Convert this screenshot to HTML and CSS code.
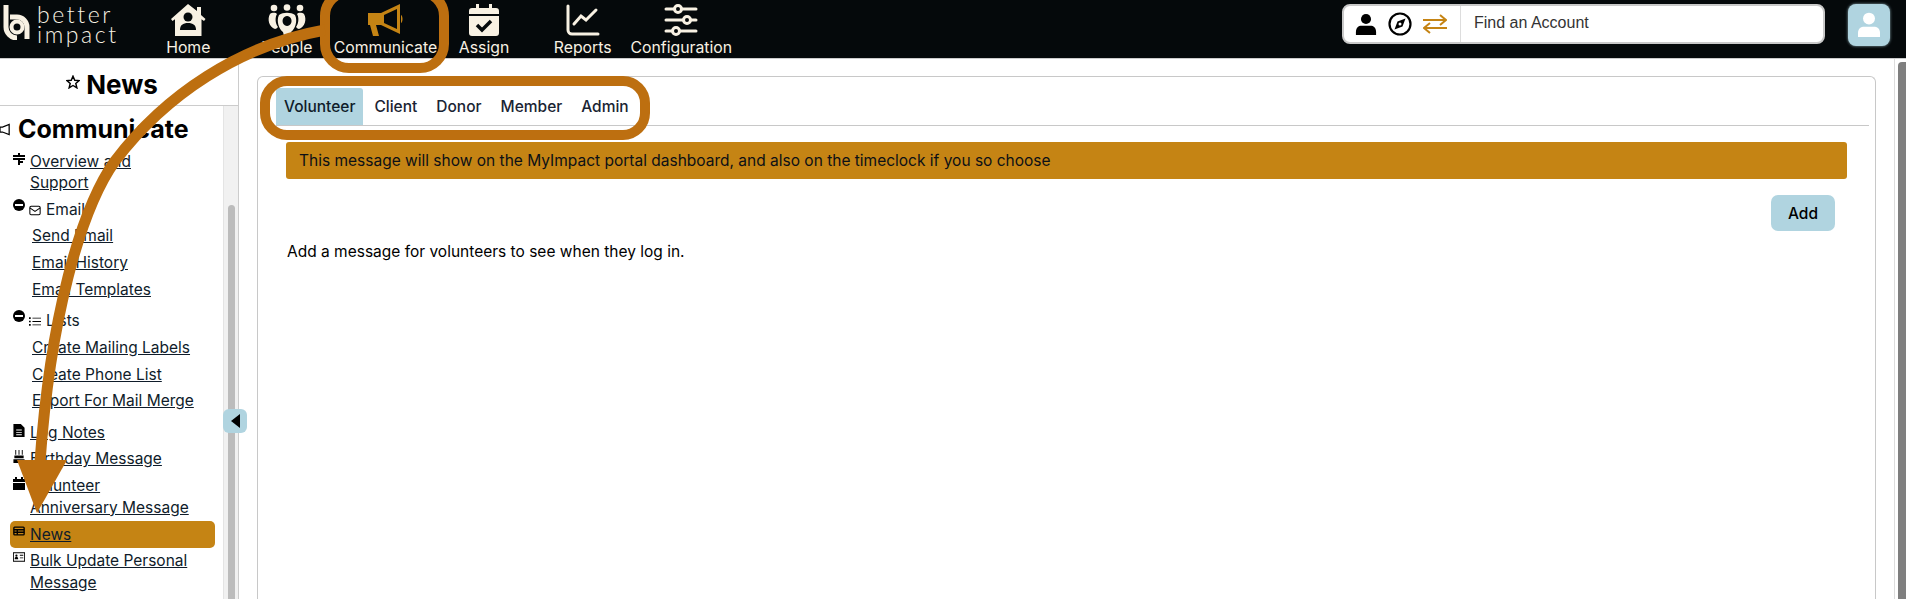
FILE: index.html
```html
<!DOCTYPE html>
<html lang="en">
<head>
    <meta charset="UTF-8">
    <title>News - Better Impact</title>
    <link rel="stylesheet" href="styles.css">
</head>
<body>
    <header class="topbar">
        <a class="logo" href="#">
            <svg class="logo-mark" viewBox="0 0 28 36" width="28" height="36" fill="none" stroke="#f8f1e3" stroke-width="5"><path d="M4 1v22a11 11 0 0 0 11 11"/><path d="M8 13h7a10 10 0 0 1 10 10v12"/><circle cx="15" cy="23" r="5.500" stroke-width="4"/></svg>
            <span class="logo-text"><span class="logo-line">better</span><span class="logo-line">impact</span></span>
        </a>
        <nav class="main-nav">
            <a class="nav-item" href="#">
                <svg viewBox="0 0 36 32" width="36" height="32"><path fill="#f8f1e3" d="M18 0l9 7V3h4v8l4.500 4-1.500 2-2.500-1.800V32H5V15.200L2.500 17 1 15z"/><circle cx="18" cy="13" r="4.500" fill="#05090b"/><path fill="#05090b" d="M10 26c0-5 3-7 8-7s8 2 8 7z"/></svg>
                <span>Home</span>
            </a>
            <a class="nav-item" href="#">
                <svg viewBox="0 0 42 32" width="42" height="32" fill="#f8f1e3"><circle cx="8" cy="4" r="3.300"/><circle cx="21" cy="3.500" r="3.300"/><circle cx="34" cy="4" r="3.300"/><path d="M4 10c3-2 6-1 7 0-2 3-2 9 1 13-1 1-2 2-3 2-6-2-8-10-5-15zM38 10c-3-2-6-1-7 0 2 3 2 9-1 13 1 1 2 2 3 2 6-2 8-10 5-15z"/><path fill-rule="evenodd" d="M13 11c4-3 12-3 16 0 3 6 0 14-4 17l-1 4h-6l-1-4c-4-3-7-11-4-17zm8 1a4.500 5 0 1 0 .1 0z"/></svg>
                <span>People</span>
            </a>
            <a class="nav-item" href="#">
                <svg viewBox="0 0 36 32" width="36" height="32"><path fill="#c58414" d="M1 9h13v12H9l3 11H6L3 21H1z"/><path fill="#c58414" fill-rule="evenodd" d="M14 9L33 0v30L14 21zm3 2v8l13 6V5z"/><path fill="#c58414" d="M34 11c2 1 2 7 0 8z"/></svg>
                <span>Communicate</span>
            </a>
            <a class="nav-item" href="#">
                <svg viewBox="0 0 30 32" width="30" height="32"><path fill="#f8f1e3" d="M7 0h3v4h10V0h3v4h4a3 3 0 0 1 3 3v3H0V7a3 3 0 0 1 3-3h4zM0 12h30v17a3 3 0 0 1-3 3H3a3 3 0 0 1-3-3z"/><path fill="none" stroke="#05090b" stroke-width="3.500" d="M8 21l5 5 9-9"/></svg>
                <span>Assign</span>
            </a>
            <a class="nav-item" href="#">
                <svg viewBox="0 0 34 32" width="34" height="32" fill="none" stroke="#f8f1e3" stroke-width="3" stroke-linecap="round"><path d="M2 2v24a4 4 0 0 0 4 4h26"/><path d="M8 20l7-8 5 4 10-10"/></svg>
                <span>Reports</span>
            </a>
            <a class="nav-item" href="#">
                <svg viewBox="0 0 34 32" width="34" height="32" fill="none" stroke="#f8f1e3" stroke-width="3" stroke-linecap="round"><path d="M2 5h8M18 5h14M2 16h17M27 16h5M2 27h6M16 27h16"/><circle cx="14" cy="5" r="3.500"/><circle cx="23" cy="16" r="3.500"/><circle cx="12" cy="27" r="3.500"/></svg>
                <span>Configuration</span>
            </a>
        </nav>
        <div class="search">
            <div class="search-icons">
                <svg viewBox="0 0 24 24" width="22" height="24"><circle cx="12" cy="6.500" r="5.500"/><path d="M1 24v-3c0-5 3-7 6-7h10c3 0 6 2 6 7v3z"/></svg>
                <svg viewBox="0 0 24 24" width="24" height="24"><circle cx="12" cy="12" r="10.500" fill="none" stroke="#000" stroke-width="2.200"/><path d="M17.500 6.500l-3 8-8 3 3-8z"/><circle cx="12" cy="12" r="1.500" fill="#fff"/></svg>
                <svg viewBox="0 0 24 20" width="24" height="20" fill="none" stroke="#c58414" stroke-width="2"><path d="M0 6h23M17 1l6 5-6 5M24 14H1M7 9l-6 5 6 5"/></svg>
            </div>
            <div class="search-text">Find an Account</div>
        </div>
        <a class="avatar" href="#">
            <svg viewBox="0 0 24 28" width="22" height="26" fill="#fff"><circle cx="12" cy="7" r="6.500"/><path d="M0 27v-4c0-5 3-7 7-7h10c4 0 7 2 7 7v4z"/></svg>
        </a>
    </header>

    <div class="page">
        <aside class="sidebar">
            <h1 class="page-title">
                <svg viewBox="0 0 24 24" width="14" height="14" fill="none" stroke="#000" stroke-width="2.500"><path d="M12 2l3 7 7.500.6-5.700 5 1.800 7.400-6.600-4-6.600 4 1.800-7.400-5.700-5L9 9z"/></svg>
                News
            </h1>
            <div class="side-body">
                <div class="side-list">
                    <h2 class="side-heading">
                        <svg viewBox="0 0 12 14" width="10" height="13" fill="none" stroke="#000" stroke-width="1.500"><path d="M0 4h3l8-3v12L3 10H0z"/></svg>
                        Communicate
                    </h2>
                    <ul class="menu">
                        <li class="menu-item">
                            <svg viewBox="0 0 12 12" width="12" height="12"><path d="M5 0h2v2h5v2H0V2h5zM0 5h12v2H7v1h3v2H7v2H5V7H0z"/></svg>
                            <a href="#">Overview and Support</a>
                        </li>
                        <li class="menu-section">
                            <span class="minus"></span>
                            <svg viewBox="0 0 14 12" width="12" height="11" fill="none" stroke="#000" stroke-width="1.200"><rect x="1" y="1" width="12" height="10" rx="1.500"/><path d="M1 3l6 4 6-4"/></svg>
                            <span>Email</span>
                        </li>
                        <li class="menu-sub"><a href="#">Send Email</a></li>
                        <li class="menu-sub"><a href="#">Email History</a></li>
                        <li class="menu-sub"><a href="#">Email Templates</a></li>
                        <li class="menu-section section-gap">
                            <span class="minus"></span>
                            <svg viewBox="0 0 14 12" width="12" height="11"><path d="M0 1h2v2H0zM0 5h2v2H0zM0 9h2v2H0zM4 1.500h10v1H4zM4 5.500h10v1H4zM4 9.500h10v1H4z"/></svg>
                            <span>Lists</span>
                        </li>
                        <li class="menu-sub"><a href="#">Create Mailing Labels</a></li>
                        <li class="menu-sub"><a href="#">Create Phone List</a></li>
                        <li class="menu-sub"><a href="#">Export For Mail Merge</a></li>
                        <li class="menu-item section-gap">
                            <svg viewBox="0 0 12 14" width="10" height="13"><path fill-rule="evenodd" d="M0 0h8l4 4v10H0zM3 6v1h6V6zM3 8.500v1h6v-1zM3 11v1h6v-1z"/></svg>
                            <a href="#">Log Notes</a>
                        </li>
                        <li class="menu-item">
                            <svg viewBox="0 0 12 14" width="12" height="13"><path d="M2 0h1v5H2zM5.500 0h1v5h-1zM9 0h1v5H9zM1 6h10v3H1zM0 10h12v4H0z"/></svg>
                            <a href="#">Birthday Message</a>
                        </li>
                        <li class="menu-item">
                            <svg viewBox="0 0 12 13" width="12" height="13"><path d="M2 0h2v2h4V0h2v2h2v3H0V2h2zM0 6h12v7H0z"/></svg>
                            <a href="#">Volunteer Anniversary Message</a>
                        </li>
                        <li class="menu-item active">
                            <svg viewBox="0 0 14 11" width="12" height="10" fill="none" stroke="#000" stroke-width="1.600"><rect x="1" y="1" width="12" height="9" rx="1"/><path d="M1 4h12M1 7h12M5 4v6"/></svg>
                            <a href="#">News</a>
                        </li>
                        <li class="menu-item">
                            <svg viewBox="0 0 14 11" width="12" height="10"><path fill-rule="evenodd" d="M0 0h14v11H0zM1 1v9h12V1zM2 7c0-2 4-2 4 0v1H2zM8 3h4v1H8zM8 6h4v1H8z"/><circle cx="4" cy="4" r="1.300"/></svg>
                            <a href="#">Bulk Update Personal Message</a>
                        </li>
                    </ul>
                </div>
                <div class="side-scroll"><div class="side-thumb"></div></div>
            </div>
            <button class="collapse" type="button"><span class="collapse-arrow"></span></button>
        </aside>

        <main class="content">
            <section class="panel">
                <div class="tabs">
                    <a class="tab active" href="#">Volunteer</a>
                    <a class="tab" href="#">Client</a>
                    <a class="tab" href="#">Donor</a>
                    <a class="tab" href="#">Member</a>
                    <a class="tab" href="#">Admin</a>
                </div>
                <div class="alert">This message will show on the MyImpact portal dashboard, and also on the timeclock if you so choose</div>
                <div class="actions"><button class="btn" type="button">Add</button></div>
                <p class="hint">Add a message for volunteers to see when they log in.</p>
            </section>
        </main>
        <div class="page-scroll"><div class="page-thumb"></div></div>
    </div>

    <!-- annotation drawn over the screenshot -->
    <svg class="callouts" viewBox="0 0 1906 599" width="1906" height="599" fill="none" stroke="#bd6f10" stroke-width="10">
        <rect x="325" y="-8" width="119" height="76" rx="24"/>
        <rect x="265" y="81" width="380" height="54" rx="22"/>
        <path d="M325 30C240 45 165 95 115 161C80 210 50 320 40 462" stroke-width="11"/>
        <path d="M17 460H67L37 513z" fill="#bd6f10" stroke="none"/>
    </svg>
</body>
</html>
```

FILE: styles.css
```css
* {
    box-sizing: border-box;
}

body {
    position: relative;
    display: flex;
    flex-direction: column;
    width: 1906px;
    height: 599px;
    margin: 0;
    overflow: hidden;
    font-family: Inter, Arial, sans-serif;
    font-size: 15.5px;
    color: #0f1c2a;
    background-color: #fff;
}

a {
    color: inherit;
}

/* Barra superior */
.topbar {
    display: flex;
    align-items: flex-start;
    flex: none;
    height: 59px;
    background-color: #05090b;
    border-bottom: 1px solid #ccc;
}

.logo {
    display: flex;
    width: 139px;
    padding: 4px 0 0 2px;
    color: #f8f1e3;
    text-decoration: none;
}

.logo-text {
    display: flex;
    flex-direction: column;
    margin: -3px 0 0 7px;
    font-family: Lato, sans-serif;
    font-size: 23px;
    font-weight: 300;
    letter-spacing: 2.6px;
}

.logo-line {
    height: 20px;
    line-height: 27px;
}

.main-nav {
    display: flex;
}

.nav-item {
    display: flex;
    flex-direction: column;
    align-items: center;
    width: 98.6px;
    height: 58px;
    padding-top: 4px;
    font-size: 15.8px;
    color: #f8f1e3;
    text-decoration: none;
    white-space: nowrap;
}

.nav-item span {
    margin-top: 2px;
}

.search {
    display: flex;
    width: 483px;
    height: 40px;
    margin: 4px 0 0 auto;
    background-color: #fff;
    border: 2px solid #c9c9c9;
    border-radius: 8px;
}

.search-icons {
    display: flex;
    align-items: center;
    gap: 11px;
    width: 117px;
    padding-left: 11px;
    border-right: 1px solid #ddd;
}

.search-text {
    padding: 8px 0 0 13px;
    font-family: "Liberation Sans", Arial, sans-serif;
    font-size: 16px;
    color: #333;
}

.avatar {
    display: flex;
    justify-content: center;
    align-items: center;
    width: 42px;
    height: 42px;
    margin: 4px 16px 0 23px;
    background-color: #b0d4e0;
    border-radius: 8px;
    box-shadow: 0 0 3px rgba(176, 212, 224, 0.8);
}

/* Cuerpo */
.page {
    display: flex;
    flex: 1;
    min-height: 0;
}

.sidebar {
    position: relative;
    display: flex;
    flex-direction: column;
    flex: none;
    width: 239px;
    border-right: 1px solid #ccc;
}

.page-title {
    display: flex;
    justify-content: center;
    align-items: flex-start;
    gap: 6px;
    flex: none;
    height: 47px;
    margin: 0;
    padding: 9px 14px 0 0;
    font-size: 26px;
    line-height: 34px;
    font-weight: 700;
    color: #000;
    border-bottom: 1px solid #ccc;
}

.page-title svg {
    margin-top: 7px;
}

.side-body {
    display: flex;
    flex: 1;
    min-height: 0;
}

.side-list {
    flex: 1;
    min-width: 0;
    overflow: hidden;
}

.side-heading {
    display: flex;
    align-items: center;
    gap: 8px;
    height: 34px;
    margin: 6px 0 2px;
    font-size: 25px;
    font-weight: 700;
    color: #000;
}

.menu {
    margin: 0;
    padding: 0;
    list-style: none;
    line-height: 21.5px;
}

.menu-item {
    display: flex;
    gap: 5px;
    width: 205px;
    margin-left: 10px;
    padding: 2.65px 26px 2.65px 3px;
    border-radius: 5px;
}

.menu-item svg {
    flex: none;
    width: 12px;
    margin-top: 2px;
}

.menu-section {
    display: flex;
    margin-left: 13px;
    padding: 2.4px 0 2.65px;
}

.menu-section svg {
    margin: 6px 5px 0 4px;
}

.minus {
    position: relative;
    flex: none;
    width: 12px;
    height: 12px;
    background-color: #000;
    border-radius: 50%;
}

.minus::after {
    content: "";
    position: absolute;
    left: 2px;
    top: 5px;
    width: 8px;
    height: 2px;
    background-color: #fff;
}

.menu-sub {
    padding: 2.65px 0 2.65px 32px;
}

.section-gap {
    margin-top: 4.5px;
}

.menu-item.active {
    background-color: #c58414;
}

.side-scroll {
    flex: none;
    width: 15px;
    padding: 99px 3px 0 4px;
    background-color: #f1f1f1;
    border-left: 1px solid #e4e4e4;
}

.side-thumb {
    height: 100%;
    background-color: #bcbcbc;
    border-radius: 4px 4px 0 0;
}

.collapse {
    position: absolute;
    left: 223px;
    top: 350px;
    display: flex;
    justify-content: center;
    align-items: center;
    width: 24px;
    height: 24px;
    padding: 0;
    background-color: #b0d4e0;
    border: none;
    border-radius: 6px;
}

.collapse-arrow {
    width: 0;
    height: 0;
    border-top: 7px solid transparent;
    border-bottom: 7px solid transparent;
    border-right: 9px solid #000;
}

.content {
    flex: 1;
    min-width: 0;
    padding: 17px 18px 0 18px;
}

.panel {
    height: 100%;
    padding: 11px 6px 0 18px;
    border: 1px solid #c8c8c8;
    border-bottom: none;
    border-radius: 6px 6px 0 0;
}

.tabs {
    display: flex;
    gap: 3px;
    height: 38px;
    border-bottom: 1px solid #c8c8c8;
}

.tab {
    padding: 0 8px;
    line-height: 37px;
    font-weight: 500;
    color: #1a2433;
    text-decoration: none;
}

.tab.active {
    color: #0f1c2a;
    background-color: #b0d4e0;
    border-radius: 3px 3px 0 0;
}

.alert {
    height: 37px;
    margin: 16px 22px 0 10px;
    padding-left: 13px;
    line-height: 37px;
    background-color: #c58414;
    border-radius: 3px;
    color: #0c1016;
}

.actions {
    display: flex;
    justify-content: flex-end;
    margin: 16px 34px 0 0;
}

.btn {
    width: 64px;
    height: 36px;
    font-family: inherit;
    font-size: 15.5px;
    font-weight: 500;
    color: #000;
    background-color: #b0d4e0;
    border: none;
    border-radius: 7px;
}

.hint {
    margin: 11px 0 0 11px;
    line-height: 20px;
    color: #000;
}

.page-scroll {
    flex: none;
    width: 12px;
    padding: 3px 0 0 3px;
    border-left: 1px solid #ddd;
}

.page-thumb {
    height: 100%;
    background-color: #7f7f7f;
    border-radius: 4px 0 0 0;
}

/* Anotaciones encima de la captura */
.callouts {
    position: absolute;
    left: 0;
    top: 0;
    pointer-events: none;
}
```
